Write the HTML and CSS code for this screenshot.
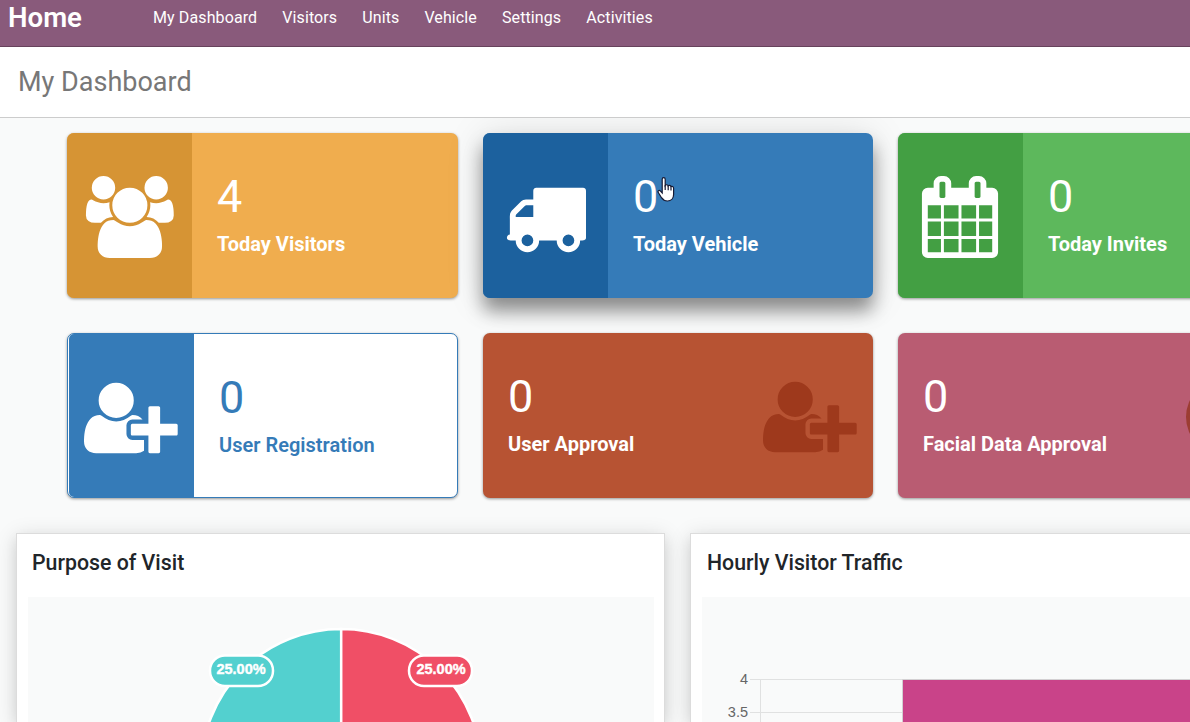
FILE: index.html
```html
<!DOCTYPE html>
<html lang="en">
<head>
<meta charset="utf-8">
<title>My Dashboard</title>
<link rel="stylesheet" href="styles.css">
</head>
<body>
<svg class="defs" width="0" height="0">
  <defs>
    <path id="users" d="M657 896q-162 5-265 128h-134q-82 0-138-40.5t-56-118.5q0-353 124-353 6 0 43.5 21t97.5 42.5 119 21.5q67 0 133-23-5 37-5 66 0 139 81 256zm1071 637q0 120-73 189.5t-194 69.5h-874q-121 0-194-69.5t-73-189.5q0-53 3.5-103.5t14-109 26.5-108.5 43-97.5 62-81 85.5-53.5 111.5-20q10 0 43 21.5t73 48 107 48 135 21.5 135-21.5 107-48 73-48 43-21.5q61 0 111.5 20t85.5 53.5 62 81 43 97.5 26.5 108.5 14 109 3.5 103.5zm-1024-1277q0 106-75 181t-181 75-181-75-75-181 75-181 181-75 181 75 75 181zm704 384q0 159-112.5 271.5t-271.5 112.5-271.5-112.5-112.5-271.5 112.5-271.5 271.5-112.5 271.5 112.5 112.5 271.5zm576 225q0 78-56 118.5t-138 40.5h-134q-103-123-265-128 81-117 81-256 0-29-5-66 66 23 133 23 59 0 119-21.5t97.5-42.5 43.5-21q124 0 124 353zm-128-609q0 106-75 181t-181 75-181-75-75-181 75-181 181-75 181 75 75 181z"/>
    <path id="truck" d="M640 1408q0-52-38-90t-90-38-90 38-38 90 38 90 90 38 90-38 38-90zm-384-512h384v-256h-158q-13 0-22 9l-195 195q-9 9-9 22v30zm1280 512q0-52-38-90t-90-38-90 38-38 90 38 90 90 38 90-38 38-90zm256-1088v1024q0 15-4 26.5t-13.5 18.5-16.5 11.5-23.5 6-22.5 2-25.5 0-22.5-.5q0 106-75 181t-181 75-181-75-75-181h-384q0 106-75 181t-181 75-181-75-75-181h-64q-3 0-22.5.5t-25.5 0-22.5-2-23.5-6-16.5-11.5-13.5-18.5-4-26.5q0-26 19-45t45-19v-320q0-8-.5-35t0-38 2.5-34.5 6.5-37 14-30.5 22.5-30l198-198q19-19 50.5-32t58.5-13h160v-192q0-26 19-45t45-19h1024q26 0 45 19t19 45z"/>
    <path id="calendar" d="M192 1664h288v-288h-288v288zm352 0h320v-288h-320v288zm-352-352h288v-320h-288v320zm352 0h320v-320h-320v320zm-352-384h288v-288h-288v288zm736 736h320v-288h-320v288zm-384-736h320v-288h-320v288zm768 736h288v-288h-288v288zm-384-352h320v-320h-320v320zm-352-864v-288q0-13-9.5-22.5t-22.5-9.5h-64q-13 0-22.5 9.5t-9.5 22.5v288q0 13 9.5 22.5t22.5 9.5h64q13 0 22.5-9.5t9.5-22.5zm736 864h288v-320h-288v320zm-384-384h320v-288h-320v288zm384 0h288v-288h-288v288zm32-480v-288q0-13-9.5-22.5t-22.5-9.5h-64q-13 0-22.5 9.5t-9.5 22.5v288q0 13 9.5 22.5t22.5 9.5h64q13 0 22.5-9.5t9.5-22.5zm384-64v1280q0 52-38 90t-90 38h-1408q-52 0-90-38t-38-90v-1280q0-52 38-90t90-38h128v-96q0-66 47-113t113-47h64q66 0 113 47t47 113v96h384v-96q0-66 47-113t113-47h64q66 0 113 47t47 113v96h128q52 0 90 38t38 90z"/>
    <path id="user-plus" d="M704 896q-159 0-271.5-112.5t-112.5-271.5 112.5-271.5 271.5-112.5 271.5 112.5 112.5 271.5-112.5 271.5-271.5 112.5zm960 128h352q13 0 22.5 9.5t9.5 22.5v192q0 13-9.5 22.5t-22.5 9.5h-352v352q0 13-9.5 22.5t-22.5 9.5h-192q-13 0-22.5-9.5t-9.5-22.5v-352h-352q-13 0-22.5-9.5t-9.5-22.5v-192q0-13 9.5-22.5t22.5-9.5h352v-352q0-13 9.5-22.5t22.5-9.5h192q13 0 22.5 9.5t9.5 22.5v352zm-736 224q0 52 38 90t90 38h256v238q-68 50-171 50h-874q-121 0-194-69t-73-190q0-53 3.5-103.5t14-109 26.5-108.5 43-97.5 62-81 85.5-53.5 111.5-20q19 0 39 17 79 61 154.5 91.5t164.5 30.5 164.5-30.5 154.5-91.5q20-17 39-17 132 0 217 96h-223q-52 0-90 38t-38 90v192z"/>
  </defs>
</svg>
<header class="navbar">
  <div class="brand">Home</div>
  <nav class="menu">
    <a>My Dashboard</a><a>Visitors</a><a>Units</a><a>Vehicle</a><a>Settings</a><a>Activities</a>
  </nav>
</header>
<div class="titlebar"><h1>My Dashboard</h1></div>
<main class="content">
  <section class="cards">
    <article class="card orange">
      <div class="side"><svg class="icon wide" viewBox="0 0 2048 1792"><use href="#users"/></svg></div>
      <div class="info"><div class="num">4</div><div class="label">Today Visitors</div></div>
    </article>
    <article class="card blue raised">
      <div class="side"><svg class="icon truck" viewBox="0 0 1792 1792"><use href="#truck"/></svg></div>
      <div class="info"><div class="num">0</div><div class="label">Today Vehicle</div></div>
      <svg class="cursor" width="20" height="26" viewBox="0 0 20 26"><path d="M5.2 2.200c0-2 3-2 3 0v6.200c.6-1 2.600-.8 2.900.4.8-.8 2.500-.5 2.800.7 1-.5 2.700 0 2.700 1.700v6.300c0 3.800-2.400 6.500-6.200 6.500-2.700 0-4.400-1-5.900-3.300L1.300 15.500c-1-1.700.9-2.800 2.200-1.400l1.700 1.800z" fill="#fff" stroke="#161a33" stroke-width="1.200"/><path d="M8.200 8v5M11.200 9v4.300M14 9.800v3.700" stroke="#161a33" stroke-width="1.200" fill="none"/></svg>
    </article>
    <article class="card green">
      <div class="side"><svg class="icon" viewBox="0 0 1792 1792"><use href="#calendar"/></svg></div>
      <div class="info"><div class="num">0</div><div class="label">Today Invites</div></div>
    </article>
    <article class="card outline">
      <div class="side"><svg class="icon wide plus" viewBox="0 0 2048 1792"><use href="#user-plus"/></svg></div>
      <div class="info"><div class="num">0</div><div class="label">User Registration</div></div>
    </article>
    <article class="card rust">
      <div class="info"><div class="num">0</div><div class="label">User Approval</div></div>
      <svg class="icon wide end" viewBox="0 0 2048 1792"><use href="#user-plus"/></svg>
    </article>
    <article class="card rose">
      <div class="info"><div class="num">0</div><div class="label">Facial Data Approval</div></div>
      <div class="face"></div>
    </article>
  </section>
  <section class="panels">
    <article class="panel">
      <h2>Purpose of Visit</h2>
      <div class="chart">
        <svg width="626" height="125" viewBox="28 597 626 125">
          <g stroke="#fff" stroke-width="2.500">
            <path d="M341.200 769V629A140 140 0 0 0 201.200 769z" fill="#53d0cf"/>
            <path d="M341.200 769V629A140 140 0 0 1 481.200 769z" fill="#f04f66"/>
            <rect x="210" y="655.500" width="63" height="30.500" rx="15" fill="#53d0cf"/>
            <rect x="409" y="655.500" width="63" height="30.500" rx="15" fill="#f04f66"/>
          </g>
          <g class="pct"><text x="241" y="674">25.00%</text><text x="441" y="674">25.00%</text></g>
        </svg>
      </div>
    </article>
    <article class="panel">
      <h2>Hourly Visitor Traffic</h2>
      <div class="chart">
        <svg width="626" height="125" viewBox="702 597 626 125">
          <path d="M750 679.500H1328M750 712.500H1328M760.500 679.500V777" stroke="#e0e1e1"/>
          <rect x="902.500" y="680" width="400" height="97" fill="#c94389"/>
          <path d="M902.500 777V679.500H1328" fill="none" stroke="#d3d0d2"/>
          <g class="tick"><text x="748" y="684">4</text><text x="748" y="717">3.5</text></g>
        </svg>
      </div>
    </article>
  </section>
</main>
</body>
</html>
```

FILE: styles.css
```css
* { box-sizing: border-box; }
html, body { height: 100%; }
body { margin: 0; overflow: hidden; background: #f9fafa; font-family: Roboto, "Liberation Sans", sans-serif; display: flex; flex-direction: column; }
.defs { position: absolute; }
.navbar { height: 47px; flex: none; background: #895a7b; border-bottom: 1px solid #67435c; color: #fff; display: flex; align-items: flex-start; }
.brand { width: 145px; padding-left: 8px; font-size: 27.600px; line-height: 36px; font-weight: 600; }
.menu { display: flex; gap: 25px; padding-left: 8px; font-size: 16px; line-height: 36px; letter-spacing: .11px; }
.titlebar { height: 71px; flex: none; background: #fff; border-bottom: 1px solid #ccc; padding-left: 18px; }
h1 { margin: 0; font-size: 27px; font-weight: 400; line-height: 70px; color: #777; }
.content { flex: 1; min-height: 0; overflow: hidden; padding: 15px 0 0 16px; }
.cards { display: grid; grid-template-columns: 391px 390px 390px; grid-auto-rows: 165px; gap: 35px 25px; padding-left: 51px; }
.card { position: relative; display: flex; border-radius: 7px; color: #fff; background: var(--main); box-shadow: 0 1px 3px rgba(0,0,0,.4); }
.side { width: 125px; flex: none; border-radius: 7px 0 0 7px; background: var(--dark); display: flex; justify-content: center; padding-top: 43px; }
.icon { width: 82px; height: 82px; flex: none; fill: currentColor; }
.side .icon { margin-left: -1px; }
.side .icon.wide { margin-left: 0; }
.icon.wide { width: 93.700px; }
.side .icon.plus { margin-left: -1px; }
.info { flex: 1; padding: 37px 0 0 25px; }
.num { font-size: 45px; line-height: 54px; }
.label { font-size: 20px; line-height: 24px; font-weight: 700; margin-top: 8px; white-space: nowrap; }
.orange { --main: #f0ad4e; --dark: #d69434; }
.blue { --main: #357bb8; --dark: #1c619e; }
.green { --main: #5db85c; --dark: #439f43; }
.rust { --main: #b75333; }
.rose { --main: #b95c72; }
.raised { box-shadow: 0 13px 18px rgba(0,0,0,.4), 0 3px 38px rgba(0,0,0,.13); }
.green, .rust { z-index: 1; }
.outline { --main: #fff; --dark: #357bb8; border: 1px solid #357bb8; padding-left: 1px; color: #357bb8; }
.outline .icon { color: #fff; }
.outline .label { font-weight: 600; letter-spacing: .02px; }
.outline .side { border-radius: 5px 0 0 5px; }
.end { color: #9e391c; margin: 43px 16px 0 0; }
.face { position: absolute; left: 288px; top: 46px; width: 76px; height: 76px; border-radius: 50%; background: #9c3d32; }
.cursor { position: absolute; left: 174px; top: 44px; }
.panels { display: grid; grid-template-columns: 649px 649px; gap: 25px; margin-top: 35px; }
.panel { height: 189px; background: #fff; border: 1px solid #dcdcdc; border-bottom: 0; padding: 0 10px 0 11px; box-shadow: 0 4px 20px rgba(0,0,0,.15), 0 5px 12px rgba(0,0,0,.06); }
h2 { margin: 0; height: 63px; padding: 14px 0 0 4px; font-size: 21.300px; line-height: 30px; font-weight: 500; color: #212529; }
.panel:last-child h2 { padding-left: 5px; }
.chart { height: 125px; background: #f9fafa; }
.chart svg { display: block; }
.pct { font: bold 14.500px "Liberation Sans", sans-serif; fill: #fff; stroke: #fff; stroke-width: .4px; text-anchor: middle; }
.tick { font: 14.500px "Liberation Sans", sans-serif; fill: #666; text-anchor: end; }
```
